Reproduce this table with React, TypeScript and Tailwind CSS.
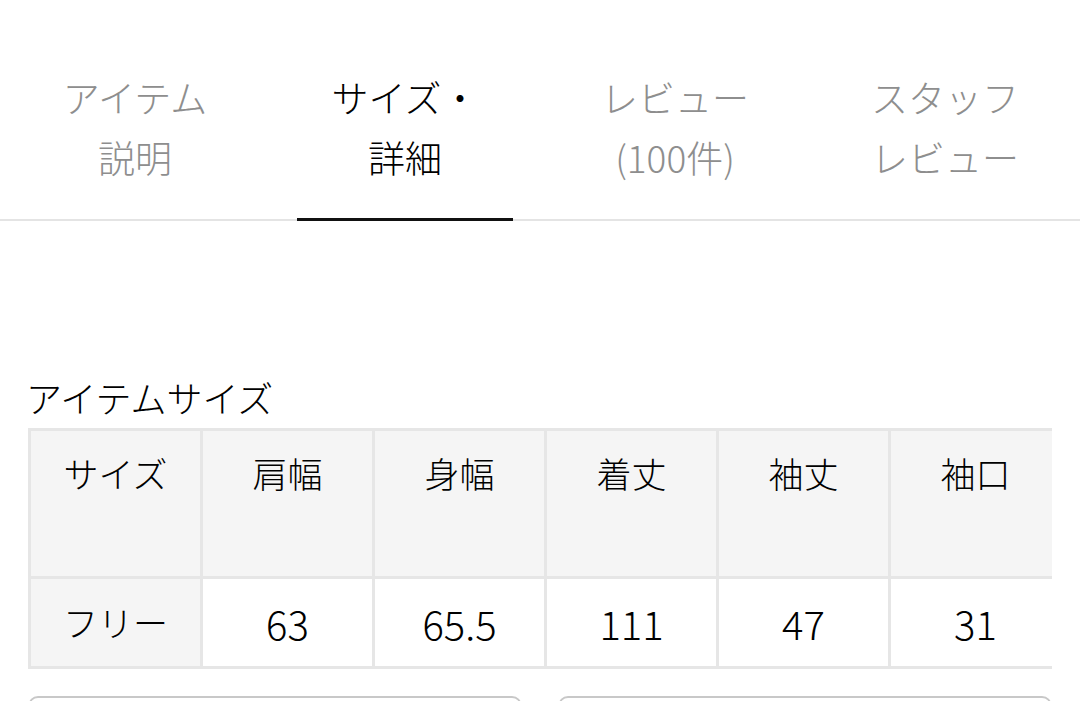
import React from "react";

const font = { fontFamily: '"Noto Sans CJK JP", "Noto Sans", sans-serif' };

const tabs = [
  { lines: ["アイテム", "説明"], active: false },
  { lines: ["サイズ・", "詳細"], active: true },
  { lines: ["レビュー", "(100件)"], active: false },
  { lines: ["スタッフ", "レビュー"], active: false },
];

const heads = ["サイズ", "肩幅", "身幅", "着丈", "袖丈", "袖口"];
const values = ["フリー", "63", "65.5", "111", "47", "31"];

const App = () => {
  return (
    <div className="min-h-[701px] w-[1080px] overflow-hidden bg-white pt-[67px] font-light text-[#111]" style={font}>
      <div className="grid grid-cols-4 border-b-2 border-[#e4e4e4]">
        {tabs.map((t, i) => (
          <div key={i} className="relative flex flex-col items-center pb-[32px]">
            {t.lines.map((l, j) => (
              <span
                key={j}
                className={`text-[37px] leading-[60px] ${t.active ? "text-[#000]" : "text-[#8e8e8e]"}`}
              >
                {l}
              </span>
            ))}
            {t.active && (
              <div className="absolute bottom-[-2px] left-[27px] right-[27px] h-[3px] bg-[#111]" />
            )}
          </div>
        ))}
      </div>

      <h2 className="mt-[152px] pl-[26px] text-[36px] leading-[48px] text-[#000]">アイテムサイズ</h2>

      <div className="mt-[7px] ml-[28px] w-[1024px] overflow-hidden">
        <div className="grid w-max grid-cols-[repeat(6,169px)] gap-[3px] bg-[#e6e6e6] p-[3px]">
          {heads.map((h) => (
            <div key={h} className="flex h-[145px] justify-center bg-[#f5f5f5] pt-[18px] text-[35px] leading-[48px] text-[#000]">
              {h}
            </div>
          ))}
          {values.map((v, i) => (
            <div
              key={i}
              className={`flex h-[87px] items-center justify-center text-[#000] ${i === 0 ? "bg-[#f5f5f5] text-[35px]" : "bg-white text-[40px]"}`}
            >
              {v}
            </div>
          ))}
        </div>
      </div>

      <div className="mt-[27px] flex gap-[36px] px-[28px]">
        <div className="h-[60px] w-[494px] rounded-[10px] border-2 border-[#c8c8c8]" />
        <div className="h-[60px] w-[494px] rounded-[10px] border-2 border-[#c8c8c8]" />
      </div>
    </div>
  );
};

export default App;
